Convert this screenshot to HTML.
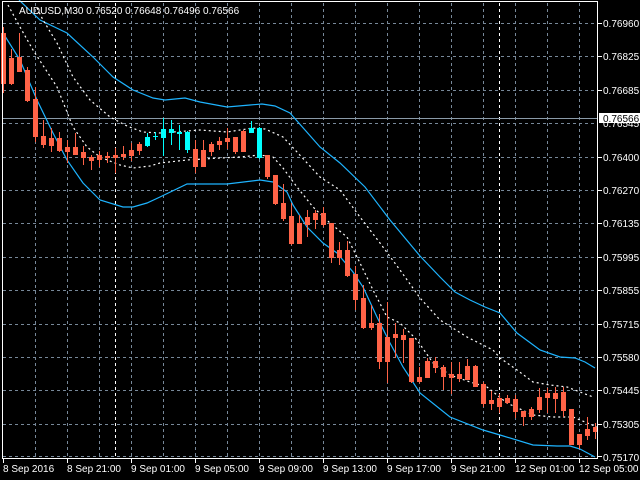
<!DOCTYPE html>
<html><head><meta charset="utf-8"><style>
html,body{margin:0;padding:0;background:#000;width:640px;height:480px;overflow:hidden}
svg{display:block}
text{font-family:"Liberation Sans",sans-serif;font-size:10px;fill:#fff}
</style></head><body>
<svg width="640" height="480" viewBox="0 0 640 480" xmlns="http://www.w3.org/2000/svg">
<rect width="640" height="480" fill="#000"/>
<g stroke="#778899" stroke-width="1" stroke-dasharray="3,3" shape-rendering="crispEdges" fill="none">
<path d="M35.5 3V458M67.5 3V458M99.5 3V458M131.5 3V458M163.5 3V458M195.5 3V458M227.5 3V458M259.5 3V458M291.5 3V458M323.5 3V458M355.5 3V458M387.5 3V458M419.5 3V458M451.5 3V458M483.5 3V458M515.5 3V458M547.5 3V458M579.5 3V458"/>
<path d="M3 23.5H597M3 56.5H597M3 90.5H597M3 123.5H597M3 157.5H597M3 190.5H597M3 223.5H597M3 257.5H597M3 290.5H597M3 324.5H597M3 357.5H597M3 390.5H597M3 424.5H597M3 456.5H597"/>
</g>
<path d="M115.5 3V458M499.5 3V458" stroke="#fff" stroke-dasharray="3,3" shape-rendering="crispEdges"/>
<path d="M3 118.5H597" stroke="#8a9aa8" shape-rendering="crispEdges"/>
<g fill="none" stroke="#1eb4ff" stroke-width="1.2">
<polyline points="19,0 40,20 67,33 93,57 113,77 133,90 153,98 165,100 185,98 200,102 227,107 250,105 262,104 275,106 290,113 305,130 320,147 340,163 365,187 390,220 420,256 440,277 455,292 470,300 485,307 500,313 517,333 540,350 560,357 575,358 585,362 595,368"/>
<polyline points="3,33 20,60 37,100 53,133 67,160 83,183 100,200 123,207 133,207 147,203 160,197 187,184 227,184 260,180 273,182 287,192 293,205 307,227 323,243 337,253 353,272 363,287 377,317 390,343 403,367 420,393 450,417 483,430 500,435 533,445 557,446 570,446 580,449 595,457"/>
</g>
<g fill="none" stroke="#fff" stroke-width="1.2" stroke-dasharray="2,3">
<polyline points="37,8 43,20 57,43 73,77 90,100 110,117 127,126 143,132 160,133 200,130 227,132 253,128 265,129 283,137 297,152 320,177 340,190 360,217 380,243 400,270 420,298 440,320 467,337 493,350 500,358 517,370 533,382 550,385 567,387 580,392 593,397"/>
<polyline points="8,5 20,27 33,50 57,87 73,127 87,147 100,157 120,165 133,168 150,166 160,163 187,160 220,158 240,157 260,155 273,157 283,168 297,187 313,207 330,223 347,237 360,263 373,290 387,317 400,323 417,340 433,363 450,375 470,382 487,387 507,403 533,415 553,417 573,417 597,427"/>
</g>
<g shape-rendering="crispEdges">
<path stroke="#ff6347" fill="none" d="M3.5 27V93M11.5 49V85M19.5 33V71M27.5 67V102M35.5 87V142M43.5 120V148M51.5 128V152M59.5 132V152M67.5 140V163M75.5 133V155M83.5 146V165M91.5 155V170M99.5 151V167M107.5 152V163M115.5 148V173M123.5 146V160M131.5 143V161M139.5 142V155M195.5 140V173M203.5 140V167M211.5 142V156M219.5 137V150M227.5 128V149M235.5 137V154M243.5 130V152M267.5 155V179M275.5 175V205M283.5 184V221M291.5 203V245M299.5 215V243M307.5 210V237M315.5 210V229M323.5 207V227M331.5 223V263M339.5 242V265M347.5 241V277M355.5 266V310M363.5 285V329M371.5 305V330M379.5 314V369M387.5 302V383M395.5 323V358M403.5 329V363M411.5 338V383M419.5 367V383M427.5 358V378M435.5 357V373M443.5 365V390M451.5 362V394M459.5 362V382M467.5 359V379M475.5 365V386M483.5 382V407M491.5 391V410M499.5 394V413M507.5 395V404M515.5 395V418M523.5 411V426M531.5 407V420M539.5 388V413M547.5 388V413M555.5 387V413M563.5 387V417M571.5 409V444M579.5 434V449M587.5 417V440M595.5 423V439"/>
<path fill="#ff6347" d="M1 33h5V84h-5zM9 58h5V84h-5zM17 57h5V72h-5zM25 70h5V101h-5zM33 99h5V137h-5zM41 136h5V145h-5zM49 138h5V146h-5zM57 138h5V151h-5zM65 147h5V152h-5zM73 147h5V155h-5zM81 152h5V158h-5zM89 157h5V161h-5zM97 155h5V160h-5zM105 156h5V158h-5zM113 155h5V158h-5zM121 154h5V157h-5zM129 150h5V156h-5zM137 144h5V151h-5zM193 149h5V167h-5zM201 150h5V167h-5zM209 144h5V152h-5zM217 141h5V145h-5zM225 138h5V142h-5zM233 137h5V152h-5zM241 131h5V152h-5zM265 155h5V177h-5zM273 175h5V204h-5zM281 203h5V219h-5zM289 216h5V244h-5zM297 223h5V244h-5zM305 217h5V225h-5zM313 213h5V220h-5zM321 213h5V225h-5zM329 223h5V258h-5zM337 250h5V258h-5zM345 250h5V276h-5zM353 274h5V300h-5zM361 298h5V328h-5zM369 323h5V328h-5zM377 323h5V362h-5zM385 337h5V362h-5zM393 334h5V338h-5zM401 335h5V340h-5zM409 338h5V382h-5zM417 377h5V382h-5zM425 361h5V378h-5zM433 361h5V368h-5zM441 367h5V377h-5zM449 374h5V378h-5zM457 374h5V379h-5zM465 366h5V380h-5zM473 366h5V387h-5zM481 384h5V404h-5zM489 400h5V404h-5zM497 398h5V407h-5zM505 398h5V403h-5zM513 399h5V412h-5zM521 411h5V417h-5zM529 409h5V417h-5zM537 397h5V410h-5zM545 393h5V398h-5zM553 393h5V399h-5zM561 392h5V411h-5zM569 409h5V445h-5zM577 434h5V445h-5zM585 429h5V436h-5zM593 427h4V432h-4z"/>
<path stroke="#00ffff" fill="none" d="M147.5 133V147M155.5 132V140M163.5 118V156M171.5 120V145M179.5 125V150M187.5 131V153M251.5 121V132M259.5 127V159"/>
<path fill="#00ffff" d="M145 137h5V146h-5zM153 136h5V137h-5zM161 129h5V138h-5zM169 129h5V133h-5zM177 132h5V134h-5zM185 132h5V150h-5zM249 128h5V133h-5zM257 128h5V158h-5z"/>
</g>
<rect x="2.5" y="1.5" width="595" height="457" fill="none" stroke="#fff" shape-rendering="crispEdges"/>
<text x="19" y="14">AUDUSD,M30  0.76520 0.76648 0.76496 0.76566</text>
<g stroke="#fff" shape-rendering="crispEdges">
<path d="M598 23.5h4M598 56.5h4M598 90.5h4M598 157.5h4M598 190.5h4M598 223.5h4M598 257.5h4M598 290.5h4M598 324.5h4M598 357.5h4M598 390.5h4M598 424.5h4M598 456.5h4"/>
<path d="M3.5 459v4M67.5 459v4M131.5 459v4M195.5 459v4M259.5 459v4M323.5 459v4M387.5 459v4M451.5 459v4M515.5 459v4M579.5 459v4"/>
</g>
<g>
<text x="603" y="27">0.76960</text>
<text x="603" y="60">0.76825</text>
<text x="603" y="94">0.76685</text>
<text x="603" y="127">0.76545</text>
<text x="603" y="161">0.76400</text>
<text x="603" y="194">0.76270</text>
<text x="603" y="227">0.76135</text>
<text x="603" y="261">0.75995</text>
<text x="603" y="294">0.75855</text>
<text x="603" y="328">0.75715</text>
<text x="603" y="361">0.75580</text>
<text x="603" y="394">0.75445</text>
<text x="603" y="428">0.75305</text>
<text x="603" y="461">0.75170</text>
</g>
<rect x="599" y="113" width="41" height="10" fill="#fff"/>
<text x="603" y="122" style="fill:#000">0.76566</text>
<g>
<text x="3" y="472">8 Sep 2016</text>
<text x="67" y="472">8 Sep 21:00</text>
<text x="131" y="472">9 Sep 01:00</text>
<text x="195" y="472">9 Sep 05:00</text>
<text x="259" y="472">9 Sep 09:00</text>
<text x="323" y="472">9 Sep 13:00</text>
<text x="387" y="472">9 Sep 17:00</text>
<text x="451" y="472">9 Sep 21:00</text>
<text x="515" y="472">12 Sep 01:00</text>
<text x="579" y="472">12 Sep 05:00</text>
</g>
</svg>
</body></html>
